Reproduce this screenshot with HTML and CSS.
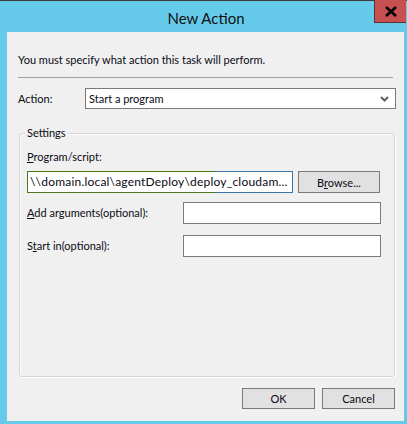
FILE: index.html
```html
<!DOCTYPE html>
<html lang="en">
<head>
<meta charset="utf-8">
<title>New Action</title>
<link rel="stylesheet" href="styles.css">
</head>
<body>
<div class="window">
  <div class="titlebar">
    <span class="title">New Action</span>
    <button class="close" aria-label="Close">
      <svg width="14" height="11" viewBox="0 0 14 11"><path d="M2 1 L12 10 M12 1 L2 10" stroke="#000" stroke-width="2.6" fill="none"/></svg>
    </button>
  </div>
  <div class="client">
    <p class="intro">You must specify what action this task will perform.</p>
    <div class="separator"></div>
    <div class="action-row">
      <label class="action-label">Act<u>i</u>on:</label>
      <div class="select">
        <span>Start a program</span>
        <svg class="chevron" width="9" height="6" viewBox="0 0 9 6"><path d="M1 1 L4.5 4.5 L8 1" stroke="#606060" stroke-width="2" fill="none"/></svg>
      </div>
    </div>
    <div class="group">
      <span class="legend">Settings</span>
      <div class="field-label"><u>P</u>rogram/script:</div>
      <div class="program-row">
        <div class="textbox program">\\domain.local\agentDeploy\deploy_cloudam...</div>
        <button class="btn browse">B<u>r</u>owse...</button>
      </div>
      <div class="opt-row args">
        <span class="opt-label"><u>A</u>dd arguments(optional):</span>
        <div class="textbox opt"></div>
      </div>
      <div class="opt-row start">
        <span class="opt-label">S<u>t</u>art in(optional):</span>
        <div class="textbox opt"></div>
      </div>
    </div>
    <div class="buttons">
      <button class="btn dlg">OK</button>
      <button class="btn dlg">Cancel</button>
    </div>
  </div>
</div>
</body>
</html>
```

FILE: styles.css
```css
* { box-sizing: border-box; }

html, body {
  margin: 0;
  padding: 0;
}

body {
  width: 407px;
  height: 424px;
  overflow: hidden;
  background: #66cbea;
  font-family: "Segoe UI", Lato, "Liberation Sans", sans-serif;
  font-size: 11px;
  color: #0a0a14;
}

.window {
  width: 407px;
  height: 424px;
  border-top: 1px solid #3b3b3b;
  background: #66cbea;
  position: relative;
}

.titlebar {
  height: 31px;
  display: flex;
  align-items: center;
  justify-content: center;
  padding-left: 5px;
}

.title {
  font-size: 15px;
  color: #111;
  line-height: 20px;
  margin-top: 2px;
}

.close {
  position: absolute;
  top: -1px;
  right: 1px;
  width: 32px;
  height: 23px;
  background: #c75050;
  border: none;
  border-left: 1px solid #5a3030;
  border-bottom: 1px solid #5a3030;
  padding: 0;
  display: flex;
  align-items: center;
  justify-content: center;
}

.client {
  margin-left: 7px;
  width: 397px;
  height: 389px;
  background: #f0f0f0;
  padding: 20px 8px 0 11px;
}

.intro {
  margin: 0;
  line-height: 16px;
}

.separator {
  margin-top: 9px;
  margin-right: 3px;
  height: 1px;
  background: #a0a0a0;
}

.action-row {
  margin-top: 10px;
  display: flex;
  align-items: center;
}

.action-label {
  width: 67px;
  line-height: 16px;
}

.select {
  width: 311px;
  height: 21px;
  background: #fff;
  border: 1px solid #7a7a7a;
  display: flex;
  align-items: center;
  justify-content: space-between;
  padding: 0 6px 0 3px;
}

.chevron { margin-top: 1px; }

/* group box with its caption sitting on the top border */
.group {
  margin: 24px 1px 0 1px;
  height: 244px;
  border: 1px solid #d5d5d5;
  border-radius: 3px;
  box-shadow: inset 1px 1px 0 #fff, 1px 1px 0 #fff;
  padding: 0 7px;
}

.legend {
  display: table;
  margin: -9px 0 0 -2px;
  padding: 0 2px;
  line-height: 16px;
  background: #f0f0f0;
}

.field-label {
  margin-top: 8px;
  line-height: 16px;
}

.program-row {
  margin-top: 6px;
  display: flex;
  gap: 5px;
}

.textbox {
  height: 22px;
  background: #fff;
  border: 1px solid #7a7a7a;
}

/* path box: slightly larger text, border shows the focus colours */
.program {
  width: 266px;
  border-image: linear-gradient(to right, #4a7a1c 71%, #3c73a8 71%) 1;
  padding: 0 2px;
  font-size: 12px;
  letter-spacing: 0.2px;
  line-height: 20px;
  white-space: nowrap;
  overflow: hidden;
}

.btn {
  font: inherit;
  color: #0a0a14;
  background: #e1e1e1;
  border: 1px solid #7a7a7a;
  padding: 0;
}

.browse {
  width: 82px;
  height: 22px;
}

.opt-row {
  display: flex;
  align-items: center;
}

.args { margin-top: 9px; }
.start { margin-top: 11px; }

.opt-label {
  width: 156px;
  line-height: 16px;
}

.opt {
  width: 198px;
}

.buttons {
  margin-top: 11px;
  margin-right: 1px;
  display: flex;
  justify-content: flex-end;
  gap: 7px;
}

.dlg {
  width: 73px;
  height: 21px;
}
```
